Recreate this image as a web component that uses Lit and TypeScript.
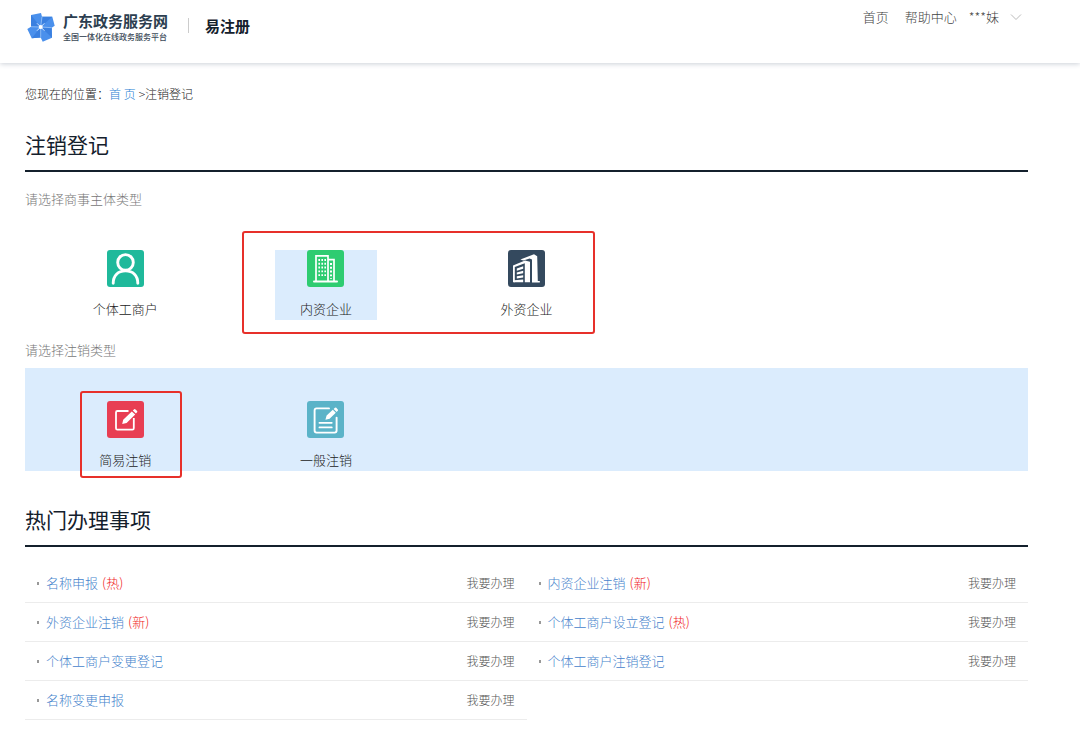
import { LitElement, html, svg, css } from "lit";
import { customElement, state } from "lit/decorators.js";

const personIcon = svg`
  <rect width="37" height="37" rx="3" fill="#1fb99b"/>
  <g fill="none" stroke="#fff" stroke-width="2.9">
    <circle cx="18.5" cy="12.4" r="7.8"/>
    <path d="M6.2 33.2C6.2 25.6 11 20.9 18.5 20.9S30.8 25.6 30.8 33.2" stroke-linecap="round"/>
  </g>`;

const officeIcon = svg`
  <rect width="37" height="37" rx="3" fill="#2ecc71"/>
  <g fill="none" stroke="#fff" stroke-width="1.7">
    <path d="M9 31.5V5.8H21V31.5M21 9.6H27V31.5"/>
    <path d="M7 31.6H30" stroke-width="2" stroke-linecap="round"/>
    <path d="M12.2 9V28M15.2 9V28M18.2 9V28" stroke-width="1.6" stroke-dasharray="1.9 1.9"/>
    <path d="M24 13V29" stroke-width="2" stroke-dasharray="1.9 1.9"/>
  </g>`;

const towerIcon = svg`
  <rect width="37" height="37" rx="3" fill="#34495e"/>
  <g fill="#fff">
    <path d="M5 15.4L17 10.6L22 11.8V32.2H16.8V13.2L6.8 17V32.2H5Z"/>
    <path d="M12.4 9.4L26 4.2L29.2 6.2L29.8 31H31.8V32.4H24V9.6L21.6 8.6L15.4 10.4Z"/>
    <path d="M8.8 18.4L15.2 16.2V18.8L8.8 20.8ZM8.8 22.4L15.2 20.8V23.2L8.8 24.6ZM8.8 26.2L15.2 25.2V27.6L8.8 28.4ZM6 30.2L15.2 29.6V32.2H6Z"/>
  </g>`;

const editIcon = svg`
  <rect width="37" height="37" rx="3" fill="#e83e53"/>
  <path d="M21.5 10H10.4Q9 10 9 11.4V27.2Q9 28.6 10.4 28.6H25.4Q26.8 28.6 26.8 27.2V17" fill="none" stroke="#fff" stroke-width="1.8"/>
  <path d="M15.2 23L16.2 18.8L24.8 10.4L28.2 13.6L19.6 22ZM25.8 9.5L27.2 8.3Q27.9 7.8 28.5 8.4L30.1 9.9Q30.6 10.5 30.1 11.2L28.9 12.5Z" fill="#fff"/>`;

const formIcon = svg`
  <rect width="37" height="37" rx="3" fill="#5bb3c8"/>
  <g fill="none" stroke="#fff" stroke-width="1.9" stroke-linecap="round">
    <path d="M22 7.4H9.6Q7.6 7.4 7.6 9.4V29.6Q7.6 31.6 9.6 31.6H27.6Q29.6 31.6 29.6 29.6V16.6"/>
    <path d="M12.4 21.8H24.8M12.4 26.4H24.8" stroke-width="1.7"/>
  </g>
  <path d="M18.4 18.8L19.6 14.6L25.8 8.8L28.8 11.8L22.6 17.8ZM26.6 8L28 6.8Q28.7 6.3 29.3 6.8L30.8 8.4Q31.3 9 30.8 9.7L29.6 11Z" fill="#fff"/>`;

interface Option { id: string; label: string; icon: unknown; }
interface Service { name: string; tag?: string; }

const subjects: Option[] = [
  { id: "individual", label: "个体工商户", icon: personIcon },
  { id: "domestic", label: "内资企业", icon: officeIcon },
  { id: "foreign", label: "外资企业", icon: towerIcon },
];

const modes: Option[] = [
  { id: "simple", label: "简易注销", icon: editIcon },
  { id: "general", label: "一般注销", icon: formIcon },
];

const services: Service[] = [
  { name: "名称申报", tag: "热" },
  { name: "内资企业注销", tag: "新" },
  { name: "外资企业注销", tag: "新" },
  { name: "个体工商户设立登记", tag: "热" },
  { name: "个体工商户变更登记" },
  { name: "个体工商户注销登记" },
  { name: "名称变更申报" },
];

@customElement("app-root")
export class AppRoot extends LitElement {
  static styles = css`
    :host {
      display: block;
      font-family: "Noto Sans CJK SC", "Noto Sans", sans-serif;
      font-weight: 300;
      font-size: 13px;
      line-height: 20px;
      color: #222;
      background: #fff;
    }
    a { color: inherit; text-decoration: none; }
    button {
      font: inherit;
      color: inherit;
      background: none;
      border: 0;
      padding: 0;
      cursor: pointer;
    }
    h1, h2, ul { margin: 0; padding: 0; }
    header {
      display: flex;
      align-items: flex-start;
      box-sizing: border-box;
      height: 63px;
      padding: 0 58px 0 25px;
      box-shadow: 0 1px 5px #ccd0d8;
    }
    .brand { display: flex; align-items: center; gap: 6px; padding-top: 11px; }
    .mark { width: 32px; height: 32px; flex: none; }
    .brandtext { display: flex; flex-direction: column; white-space: nowrap; }
    .brandname { font-size: 15px; line-height: 18px; font-weight: 700; color: #2c3e50; }
    .brandsub {
      font-size: 8px;
      line-height: 13px;
      font-weight: 500;
      color: #3c4a58;
    }
    .product {
      margin: 18px 0 0 20px;
      padding-left: 16px;
      border-left: 1px solid #ccc;
      font-size: 15px;
      line-height: 15px;
      font-weight: 700;
      color: #14202c;
    }
    nav {
      display: flex;
      align-items: center;
      gap: 16px;
      margin-left: auto;
      padding-top: 7px;
      color: #444;
    }
    .user { display: flex; align-items: center; gap: 11px; margin-left: -4px; }
    .chevron { width: 12px; height: 8px; fill: none; stroke: #bbb; }
    main { padding: 21px 52px 12px 25px; }
    .crumbs { font-size: 12px; line-height: 20px; }
    .crumbs a { color: #2a7fd4; margin-right: 3px; }
    .heading {
      font-size: 21px;
      line-height: 30px;
      font-weight: 400;
      color: #14202c;
      padding-bottom: 11px;
      border-bottom: 2px solid #14202c;
    }
    h1.heading { margin-top: 25px; }
    h2.heading { margin-top: 33px; }
    .hint { color: #777; }
    .first { margin-top: 17px; }
    .second { margin-top: 20px; }
    .row { display: grid; grid-template-columns: repeat(5, 1fr); position: relative; }
    .subjects { margin-top: 41px; }
    .modes { margin-top: 8px; padding-top: 33px; background: #dbecfd; }
    .option {
      display: flex;
      flex-direction: column;
      align-items: center;
      justify-self: center;
      gap: 12px;
      width: 102px;
      height: 70px;
    }
    .option.on { background: #dbecfd; }
    .option svg { width: 37px; height: 37px; flex: none; }
    .callout {
      position: absolute;
      border: 2px solid #e7302a;
      border-radius: 3px;
      pointer-events: none;
    }
    .wide { grid-column: 2 / 4; inset: -19px 32px -14px 16px; }
    .narrow { grid-column: 1 / 2; inset: 23px 44px -7px 55px; }
    .list {
      display: grid;
      grid-template-columns: 1fr 1fr;
      margin-top: 17px;
      list-style: none;
    }
    .item {
      display: flex;
      align-items: center;
      gap: 7px;
      height: 38px;
      padding: 0 12px;
      border-bottom: 1px solid #ececec;
    }
    .item::before {
      content: "";
      width: 2px;
      height: 3px;
      background: #999;
    }
    .name { color: #4683cc; }
    .tag { color: #f01c1c; margin-left: -3px; }
    .apply { margin-left: auto; font-size: 12px; color: #555; }
  `;

  @state() private subject = "domestic";
  @state() private mode = "simple";

  private option(o: Option, on: boolean, pick: () => void) {
    return html`<button class="option ${on ? "on" : ""}" type="button" aria-pressed=${on} @click=${pick}>
      <svg viewBox="0 0 37 37" aria-hidden="true">${o.icon}</svg>
      <span>${o.label}</span>
    </button>`;
  }

  render() {
    return html`
      <header>
        <div class="brand">
          <svg class="mark" viewBox="0 0 32 32" aria-hidden="true">
            <path fill="#4a90ec" d="M6 4L16 2L17 5.7H27.3L29.7 14.7L26.7 16.7L27 26.7L17.7 30.7L15.7 26.5L6.7 27.3L2.3 18L6 15.7Z"/>
            <path fill="#3a80e0" d="M15.7 16L17 5.7L27.3 5.7ZM15.7 16L26.7 16.7L27 26.7ZM15.7 16L15.7 26.5L6.7 27.3ZM15.7 16L6 15.7L6 4Z"/>
            <path stroke="#a9cffa" stroke-width=".7" d="M15.7 16L17 5.7M15.7 16L26.7 16.7M15.7 16V26.5M15.7 16L6 15.7"/>
            <path stroke="#d8e9ff" stroke-width="1" d="M12 12.3L19.4 19.7M19.4 12.3L12 19.7"/>
            <circle cx="15.7" cy="16" r="2" fill="#fff"/>
          </svg>
          <div class="brandtext">
            <span class="brandname">广东政务服务网</span>
            <span class="brandsub">全国一体化在线政务服务平台</span>
          </div>
        </div>
        <div class="product">易注册</div>
        <nav>
          <a href="#home">首页</a>
          <a href="#help">帮助中心</a>
          <button class="user" type="button">***妹
            <svg class="chevron" viewBox="0 0 12 8" aria-hidden="true"><path d="M1 1.5L6 6.5L11 1.5"/></svg>
          </button>
        </nav>
      </header>
      <main>
        <div class="crumbs">您现在的位置：<a href="#home">首 页</a>&gt;注销登记</div>
        <h1 class="heading">注销登记</h1>
        <div class="hint first">请选择商事主体类型</div>
        <div class="row subjects">
          ${subjects.map((o) => this.option(o, this.subject === o.id, () => (this.subject = o.id)))}
          <div class="callout wide"></div>
        </div>
        <div class="hint second">请选择注销类型</div>
        <div class="row modes">
          ${modes.map((o) => this.option(o, this.mode === o.id, () => (this.mode = o.id)))}
          <div class="callout narrow"></div>
        </div>
        <h2 class="heading">热门办理事项</h2>
        <ul class="list">
          ${services.map((s) => html`<li class="item">
            <a class="name" href="#service">${s.name}</a>
            ${s.tag ? html`<span class="tag">(${s.tag})</span>` : ""}
            <a class="apply" href="#apply">我要办理</a>
          </li>`)}
        </ul>
      </main>
    `;
  }
}
